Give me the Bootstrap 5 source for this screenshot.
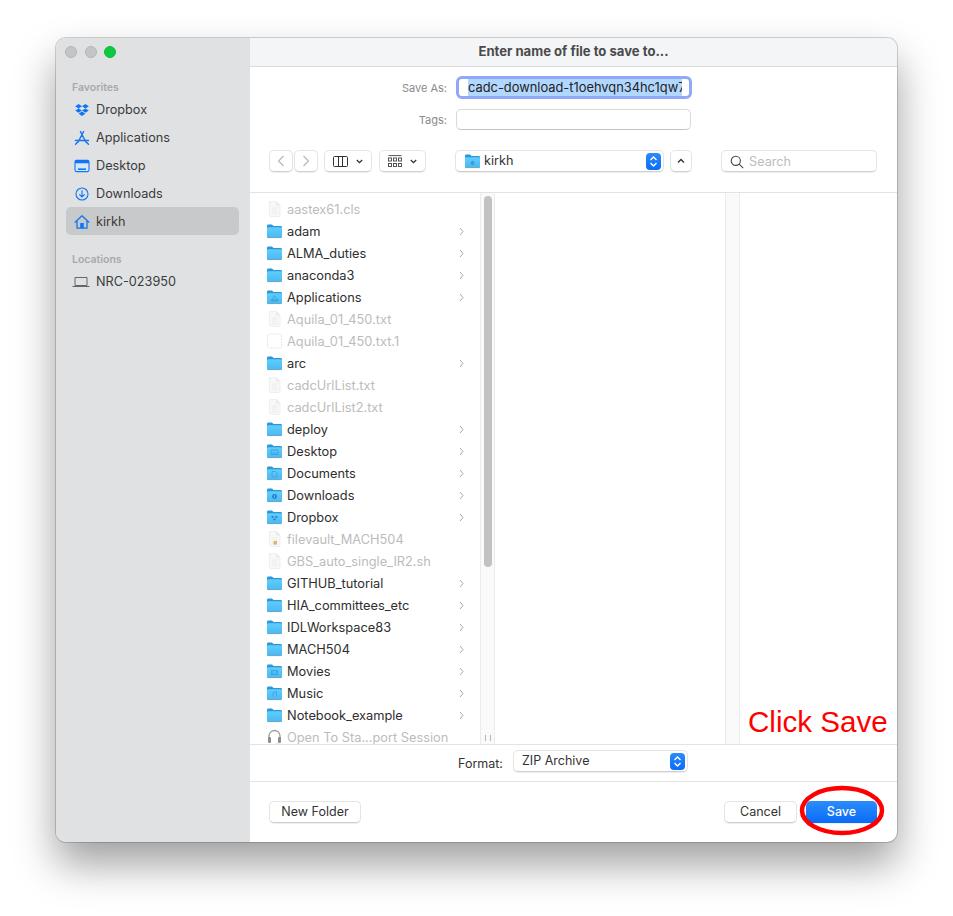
<!DOCTYPE html>
<html lang="en"><head><meta charset="utf-8"><title>Save dialog</title>
<link href="https://cdn.jsdelivr.net/npm/bootstrap@5.3.0/dist/css/bootstrap.min.css" rel="stylesheet">
<style>
html,body{background:#fff;height:916px;overflow:hidden}
body{font-family:Inter,"Liberation Sans",sans-serif;font-size:12.5px;color:#2b2b2b;padding:38px 0 0 56px;position:relative}
.mac-win{width:841px;height:804px;border-radius:10px;overflow:hidden;background:#fff;box-shadow:0 0 0 1px rgba(0,0,0,.17),0 22px 42px rgba(0,0,0,.38)}
.mac-side{width:194px;background:#e0e1e3;flex:none;padding:0 11px 0 10px}
.lights{height:41px;padding:8px 0 0 0;margin-left:-1px;gap:7.5px}
.light{width:12px;height:12px;border-radius:50%;background:#c4c5c7;border:1px solid #b3b4b6}
.light-on{background:#0dc93f;border-color:#0cbc3a}
.side-head{font-size:10.5px;font-weight:600;color:#a8a9ab;height:16px;line-height:18px;padding-left:6px}
.side-head-b{margin-top:17px;line-height:16px}
.side-item{height:28px;padding-left:8px;gap:6px;color:#3b3b3b;font-size:12.7px;border-radius:5px;padding-top:1px}
.side-item svg{width:16px;height:16px;flex:none}
.side-sel{background:#c8c9cb}
.side-loc{margin-top:-2px;padding-top:3px;padding-left:6px;gap:6px}
.side-item svg.ic-lap{width:18px}
.mac-main{min-width:0}
.mac-title{height:29px;background:#f4f5f6;border-bottom:1px solid #dcdcdc;font-weight:700;font-size:13.1px;color:#4a4a4a;text-align:center;line-height:27px}
.mac-tool{height:126px;border-bottom:1px solid #e3e3e3;padding-top:9px}
.form-line{height:23px}
.form-lab{width:206px;text-align:right;color:#8a8a8a;font-size:11px;padding-right:9px;padding-top:2px}
.form-lab-b{margin-top:10px}
.name-box{width:236px;height:23px;border:3px solid #8fa8f7;border-radius:6px;padding:0 7px 0 9px;font-size:12.87px;line-height:17px;overflow:hidden;white-space:nowrap}
.name-box span{background:#b2d7ff;display:block;overflow:hidden;width:214px;height:17px;color:#222}
.tag-box{width:235px;height:21px;border:1px solid #d9d9d9;border-bottom-color:#c4c4c4;border-radius:5px;margin-top:10px}
.nav-line{margin-top:20px;height:22px;padding-left:19px}
.mac-btn{background:#fff;border:1px solid #e4e4e4;border-bottom-color:#cfcfcf;border-radius:5px;box-shadow:0 1px 1px rgba(0,0,0,.07);height:22px;display:flex;align-items:center;justify-content:center;flex:none}
.b-nav{width:24px}
.b-nav-2{margin-left:1px}
.b-view{width:48px;margin-left:6px}
.b-group{width:47px;margin-left:7px}
.b-up{width:22px;margin-left:6px}
.path-pop{width:209px;margin-left:29px;justify-content:flex-start;padding-left:8px;gap:3px;font-size:12.7px;color:#333}
.stepper{margin-left:auto;margin-right:2px;width:15px;height:17px;border-radius:4px;background:linear-gradient(#2b8cfd,#0a6cf5);display:flex;align-items:center;justify-content:center}
.search-box{width:156px;margin-left:29px;justify-content:flex-start;padding:1px 0 0 8px;gap:5px;color:#bdbdbd;font-size:12.7px}
.mac-cols{height:552px;border-bottom:1px solid #e3e3e3;overflow:hidden}
.file-col{width:230px;flex:none;padding-top:5px}
.file-row{height:22px;padding:1px 0 0 16px;gap:4px;font-size:12.8px;color:#2e2e2e;white-space:nowrap}
.file-row svg.ic{width:17px;height:16px;flex:none;margin-top:-1px}
.file-row .arr{margin-left:auto;margin-right:16px;width:5px;height:9px;flex:none}
.is-off{color:#bcbcbc}
.gut{width:15px;flex:none;background:#fafafa;border-left:1px solid #ececec;border-right:1px solid #ececec;position:relative}
.thumb{position:absolute;left:3px;top:3px;width:8px;height:371px;border-radius:4px;background:#c2c2c2}
.grip{position:absolute;left:4px;bottom:3px;width:6px;height:6px;border-left:1px solid #b5b5b5;border-right:1px solid #b5b5b5}
.col-mid{width:230px;flex:none}
.mac-fmt{height:37px;border-bottom:1px solid #e3e3e3;padding-right:1px;gap:10px;color:#333;font-size:12.5px}
.fmt-pop{width:175px;height:22px;justify-content:flex-start;padding-left:8px;font-size:12.5px;margin-top:-4px}
.fmt-lab{padding-top:2px}
.mac-foot{height:60px;padding:19px 20px 0 19px}
.foot-btn{height:22px;font-size:12.5px;color:#333}
.w-new{width:92px}.w-cancel{width:73px;margin-left:auto}
.w-save{width:71px;margin-left:9px;background:linear-gradient(#2a8dfd,#0a6bf6);color:#fff;font-weight:500;border:0}
.note-txt{position:absolute;left:748px;top:704px;font-family:"Liberation Sans",sans-serif;font-size:29.6px;line-height:36px;color:#f00;white-space:nowrap}
.note-ring{position:absolute;left:796px;top:781px;width:92px;height:60px}
</style></head>
<body>
<svg width="0" height="0" class="position-absolute">
<defs>
<linearGradient id="fg" x1="0" y1="0" x2="0" y2="1"><stop offset="0" stop-color="#63ccfa"/><stop offset="1" stop-color="#46b9f5"/></linearGradient>
<symbol id="folder" viewBox="0 0 17 16"><path d="M1 4.5V3a1.4 1.4 0 0 1 1.4-1.4h3.6L7.6 3h7A1.4 1.4 0 0 1 16 4.4v1H1z" fill="#2798dc"/><rect x="1" y="4.3" width="15" height="10.7" rx="1.3" fill="url(#fg)"/><path d="M1.4 14.6h14.2" stroke="#7f9fb3" stroke-width=".8"/></symbol>
<symbol id="doc" viewBox="0 0 17 16"><path d="M3.5 .5h7L14 4v10.5a1 1 0 0 1-1 1H4.5a1 1 0 0 1-1-1z" fill="#f8f8f8" stroke="#efefef"/><path d="M10.5.5V4H14" fill="#eeeeee" stroke="#e9e9e9"/><path d="M6 7h5.5M6 9h5.5M6 11h5.5M6 13h5.5" stroke="#ededed"/></symbol>
<symbol id="arrow" viewBox="0 0 5 9"><path d="M1 1l3 3.5L1 8" fill="none" stroke="#a8a8a8" stroke-width="1"/></symbol>
<symbol id="updown" viewBox="0 0 9 13"><path d="M1.5 5L4.5 2l3 3M1.5 8l3 3 3-3" fill="none" stroke="#fff" stroke-width="1.4"/></symbol>
</defs></svg>

<div class="mac-win d-flex">
  <aside class="mac-side">
    <div class="lights d-flex"><span class="light"></span><span class="light"></span><span class="light light-on"></span></div>
    <div class="side-head">Favorites</div>
    <div class="side-item d-flex align-items-center"><svg viewBox="0 0 16 16"><path d="M4.6 2L1.2 4.2l3.4 2.2L8 4.2zM11.4 2L8 4.2l3.4 2.2 3.4-2.2zM4.6 6.4L1.2 8.6l3.4 2.2L8 8.6zM11.4 6.4L8 8.6l3.4 2.2 3.4-2.2zM4.7 11.7L8 14l3.3-2.3L8 9.6z" fill="#0f75f5"/></svg>Dropbox</div>
    <div class="side-item d-flex align-items-center"><svg viewBox="0 0 16 16" fill="none" stroke="#0f75f5" stroke-width="1.4" stroke-linecap="round"><path d="M9.6 1.5L4 12.2M6.4 1.5L12 12.2M1.5 10.5h13M1.6 14.2l1.6-1.6M14.4 14.2l-1.6-1.6"/></svg>Applications</div>
    <div class="side-item d-flex align-items-center"><svg viewBox="0 0 16 16"><rect x="1" y="2.4" width="14" height="11.2" rx="1.5" fill="#d6e6fb" stroke="#0f75f5" stroke-width="1.1"/><path d="M1 3.7a1.3 1.3 0 0 1 1.3-1.3h11.4A1.3 1.3 0 0 1 15 3.7v1.5H1z" fill="#0f75f5"/><rect x="4" y="10.4" width="8" height="1.6" fill="#0f75f5"/></svg>Desktop</div>
    <div class="side-item d-flex align-items-center"><svg viewBox="0 0 16 16" fill="none" stroke="#0f75f5" stroke-width="1.1"><circle cx="8" cy="8" r="6"/><path d="M8 4.6v6.2M5.6 8.6L8 11l2.4-2.4" stroke-linecap="round"/></svg>Downloads</div>
    <div class="side-item side-sel d-flex align-items-center"><svg viewBox="0 0 16 16"><path d="M.8 8.4L8 1.8l7.2 6.6M3 7v7.2h10V7" fill="none" stroke="#0f75f5" stroke-width="1.3" stroke-linejoin="round"/><rect x="6.2" y="9" width="3.6" height="5.2" fill="#0f75f5"/></svg>kirkh</div>
    <div class="side-head side-head-b">Locations</div>
    <div class="side-item side-loc d-flex align-items-center"><svg class="ic-lap" viewBox="0 0 18 16" fill="none" stroke="#666" stroke-width="1"><path d="M3 3.5h12v8H3zM.5 12.5h17"/></svg>NRC-023950</div>
  </aside>
  <main class="mac-main flex-grow-1 d-flex flex-column">
    <div class="mac-title">Enter name of file to save to...</div>
    <div class="mac-tool">
      <div class="form-line d-flex align-items-center"><div class="form-lab">Save As:</div><div class="name-box"><span>cadc-download-t1oehvqn34hc1qw7</span></div></div>
      <div class="d-flex align-items-center"><div class="form-lab form-lab-b">Tags:</div><div class="tag-box"></div></div>
      <div class="nav-line d-flex">
        <div class="mac-btn b-nav"><svg width="8" height="12" viewBox="0 0 8 12"><path d="M6.5 1L1.5 6l5 5" fill="none" stroke="#b5b5b5" stroke-width="1.1"/></svg></div>
        <div class="mac-btn b-nav b-nav-2"><svg width="8" height="12" viewBox="0 0 8 12"><path d="M1.5 1l5 5-5 5" fill="none" stroke="#b5b5b5" stroke-width="1.1"/></svg></div>
        <div class="mac-btn b-view gap-2"><svg width="15" height="11" viewBox="0 0 15 11" fill="none" stroke="#333"><rect x=".5" y=".5" width="14" height="10" rx="1"/><path d="M5.5 .5v10M9.5 .5v10"/></svg><svg width="7" height="5" viewBox="0 0 7 5"><path d="M.8 1l2.7 2.7L6.2 1" fill="none" stroke="#333" stroke-width="1.3"/></svg></div>
        <div class="mac-btn b-group gap-2"><svg width="14" height="13" viewBox="0 0 14 13" fill="none" stroke="#444" stroke-width=".9"><path d="M.5 .6h13"/><rect x=".5" y="3" width="3" height="3"/><rect x="5.5" y="3" width="3" height="3"/><rect x="10.5" y="3" width="3" height="3"/><rect x=".5" y="8.5" width="3" height="3"/><rect x="5.5" y="8.5" width="3" height="3"/><rect x="10.5" y="8.5" width="3" height="3"/></svg><svg width="7" height="5" viewBox="0 0 7 5"><path d="M.8 1l2.7 2.7L6.2 1" fill="none" stroke="#333" stroke-width="1.3"/></svg></div>
        <div class="mac-btn path-pop"><svg width="17" height="16" viewBox="0 0 17 16"><use href="#folder"/><path d="M8.5 7.5l-2.5 2.2h.9v2.3h3.2V9.7h.9z" fill="#2a8fd6" opacity=".7"/></svg>kirkh<span class="stepper"><svg width="9" height="13"><use href="#updown"/></svg></span></div>
        <div class="mac-btn b-up"><svg width="8" height="6" viewBox="0 0 8 6"><path d="M1 4.5L4 1.5l3 3" fill="none" stroke="#333" stroke-width="1.4"/></svg></div>
        <div class="mac-btn search-box"><svg width="14" height="14" viewBox="0 0 14 14" fill="none" stroke="#444" stroke-width="1.1"><circle cx="5.8" cy="5.8" r="4.6"/><path d="M9.2 9.2l4 4"/></svg>Search</div>
      </div>
    </div>
    <div class="mac-cols d-flex">
      <div class="file-col" id="files">
        <div class="file-row is-off d-flex align-items-center"><svg class="ic"><use href="#doc"/></svg>aastex61.cls</div>
        <div class="file-row d-flex align-items-center"><svg class="ic"><use href="#folder"/></svg>adam<svg class="arr"><use href="#arrow"/></svg></div>
        <div class="file-row d-flex align-items-center"><svg class="ic"><use href="#folder"/></svg>ALMA_duties<svg class="arr"><use href="#arrow"/></svg></div>
        <div class="file-row d-flex align-items-center"><svg class="ic"><use href="#folder"/></svg>anaconda3<svg class="arr"><use href="#arrow"/></svg></div>
        <div class="file-row d-flex align-items-center"><svg class="ic" viewBox="0 0 17 16"><use href="#folder" width="17" height="16"/><path d="M8.5 6.5L5.5 12h6zM4.5 11h8" fill="none" stroke="#2a8fd6" stroke-width=".8" opacity=".7"/></svg>Applications<svg class="arr"><use href="#arrow"/></svg></div>
        <div class="file-row is-off d-flex align-items-center"><svg class="ic"><use href="#doc"/></svg>Aquila_01_450.txt</div>
        <div class="file-row is-off d-flex align-items-center"><svg class="ic" viewBox="0 0 17 16"><rect x="1.5" y="1" width="14" height="14" rx="2" fill="#fff" stroke="#e6e6e6" stroke-dasharray="2 1"/></svg>Aquila_01_450.txt.1</div>
        <div class="file-row d-flex align-items-center"><svg class="ic"><use href="#folder"/></svg>arc<svg class="arr"><use href="#arrow"/></svg></div>
        <div class="file-row is-off d-flex align-items-center"><svg class="ic"><use href="#doc"/></svg>cadcUrlList.txt</div>
        <div class="file-row is-off d-flex align-items-center"><svg class="ic"><use href="#doc"/></svg>cadcUrlList2.txt</div>
        <div class="file-row d-flex align-items-center"><svg class="ic"><use href="#folder"/></svg>deploy<svg class="arr"><use href="#arrow"/></svg></div>
        <div class="file-row d-flex align-items-center"><svg class="ic" viewBox="0 0 17 16"><use href="#folder" width="17" height="16"/><path d="M5 7h7v4.5H5zM6.5 10h4" fill="none" stroke="#2a8fd6" stroke-width=".8" opacity=".7"/></svg>Desktop<svg class="arr"><use href="#arrow"/></svg></div>
        <div class="file-row d-flex align-items-center"><svg class="ic" viewBox="0 0 17 16"><use href="#folder" width="17" height="16"/><path d="M6 6.5h3.5L11 8v4H6z" fill="none" stroke="#2a8fd6" stroke-width=".8" opacity=".7"/></svg>Documents<svg class="arr"><use href="#arrow"/></svg></div>
        <div class="file-row d-flex align-items-center"><svg class="ic" viewBox="0 0 17 16"><use href="#folder" width="17" height="16"/><circle cx="8.5" cy="9.5" r="2.4" fill="#1f7fc4"/><path d="M8.5 8.3v2.4" stroke="#8fdcff" stroke-width=".8"/></svg>Downloads<svg class="arr"><use href="#arrow"/></svg></div>
        <div class="file-row d-flex align-items-center"><svg class="ic" viewBox="0 0 17 16"><use href="#folder" width="17" height="16"/><path d="M6.5 7L5 8l1.5 1L8.5 8zM10.5 7L8.5 8l2 1L12 8zM7 10.5l1.5 1 1.5-1-1.5-1z" fill="#1f7fc4"/></svg>Dropbox<svg class="arr"><use href="#arrow"/></svg></div>
        <div class="file-row is-off d-flex align-items-center"><svg class="ic" viewBox="0 0 17 16"><use href="#doc" width="17" height="16"/><rect x="7.5" y="10" width="3.5" height="3.5" fill="#e0b46a"/></svg>filevault_MACH504</div>
        <div class="file-row is-off d-flex align-items-center"><svg class="ic"><use href="#doc"/></svg>GBS_auto_single_IR2.sh</div>
        <div class="file-row d-flex align-items-center"><svg class="ic"><use href="#folder"/></svg>GITHUB_tutorial<svg class="arr"><use href="#arrow"/></svg></div>
        <div class="file-row d-flex align-items-center"><svg class="ic"><use href="#folder"/></svg>HIA_committees_etc<svg class="arr"><use href="#arrow"/></svg></div>
        <div class="file-row d-flex align-items-center"><svg class="ic"><use href="#folder"/></svg>IDLWorkspace83<svg class="arr"><use href="#arrow"/></svg></div>
        <div class="file-row d-flex align-items-center"><svg class="ic"><use href="#folder"/></svg>MACH504<svg class="arr"><use href="#arrow"/></svg></div>
        <div class="file-row d-flex align-items-center"><svg class="ic" viewBox="0 0 17 16"><use href="#folder" width="17" height="16"/><path d="M5.5 7.5h6v4h-6zM7 7.5v4M10 7.5v4" fill="none" stroke="#2a8fd6" stroke-width=".8" opacity=".7"/></svg>Movies<svg class="arr"><use href="#arrow"/></svg></div>
        <div class="file-row d-flex align-items-center"><svg class="ic" viewBox="0 0 17 16"><use href="#folder" width="17" height="16"/><path d="M7 11.5V7.5l3.5-1v4" fill="none" stroke="#2a8fd6" stroke-width=".8" opacity=".7"/></svg>Music<svg class="arr"><use href="#arrow"/></svg></div>
        <div class="file-row d-flex align-items-center"><svg class="ic"><use href="#folder"/></svg>Notebook_example<svg class="arr"><use href="#arrow"/></svg></div>
        <div class="file-row is-off d-flex align-items-center"><svg class="ic" viewBox="0 0 17 16" fill="none"><path d="M3 9V7a5.5 5.5 0 0 1 11 0v2" stroke="#9b9b9b" stroke-width="1.3"/><rect x="2" y="8" width="3" height="6" rx="1.2" fill="#8d8d8d"/><rect x="12" y="8" width="3" height="6" rx="1.2" fill="#8d8d8d"/><path d="M10 15.3h3" stroke="#e8703a"/></svg>Open To Sta...port Session</div>
      </div>
      <div class="gut"><span class="thumb"></span><span class="grip"></span></div>
      <div class="col-mid"></div>
      <div class="gut"></div>
    </div>
    <div class="mac-fmt d-flex align-items-center justify-content-center"><span class="fmt-lab">Format:</span><div class="mac-btn fmt-pop">ZIP Archive<span class="stepper"><svg width="9" height="13"><use href="#updown"/></svg></span></div></div>
    <div class="mac-foot d-flex">
      <div class="mac-btn foot-btn w-new">New Folder</div>
      <div class="mac-btn foot-btn w-cancel">Cancel</div>
      <div class="mac-btn foot-btn w-save">Save</div>
    </div>
  </main>
</div>
<div class="note-txt">Click Save</div>
<svg class="note-ring" viewBox="0 0 92 60"><ellipse cx="46" cy="29.5" rx="40" ry="22.5" fill="none" stroke="#f00" stroke-width="4.5"/></svg>
</body></html>
